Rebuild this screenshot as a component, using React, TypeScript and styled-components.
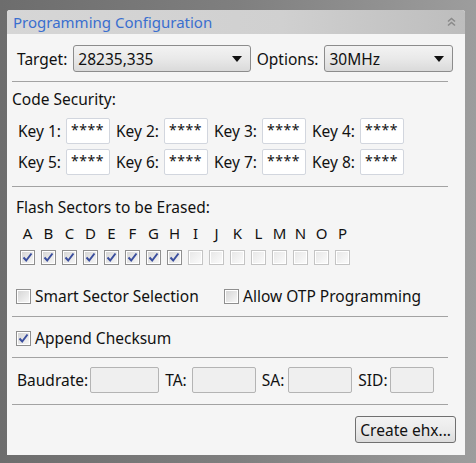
import React from 'react';
import styled, { createGlobalStyle } from 'styled-components';

const Global = createGlobalStyle`
  html, body { margin: 0; padding: 0; }
  body { font-family: 'Noto Sans', 'Open Sans', sans-serif; }
`;

const Page = styled.div`
  width: 476px;
  height: 463px;
  box-sizing: border-box;
  padding: 10px 11px 8px 7px;
  background: linear-gradient(90deg, #6d6d6d 0%, #7f7f7f 50%, #9d9d9d 100%);
  display: flex;
`;

const Panel = styled.div`
  flex: 1;
  display: flex;
  flex-direction: column;
  background: #f5f5f5;
  border-radius: 3px 3px 0 0;
  overflow: hidden;
  font-size: 15.5px;
  color: #111;
`;

const Header = styled.div`
  height: 24px;
  flex-shrink: 0;
  display: flex;
  align-items: center;
  justify-content: space-between;
  padding: 0 9px 0 6px;
  background: linear-gradient(90deg, #d6d6d6 0%, #d0d0d0 60%, #bdbdbd 100%);
`;

const Title = styled.span`
  color: #3a6fcf;
  font-size: 15px;
`;

const Body = styled.div`
  display: flex;
  flex-direction: column;
  padding: 11px 12px 0 5px;
`;

const Divider = styled.div<{ $top: number; $bottom: number }>`
  height: 1px;
  background: #a3a3a3;
  margin: ${p => p.$top}px 5px ${p => p.$bottom}px 0;
`;

const Row = styled.div<{ $gap?: number; $pl?: number }>`
  display: flex;
  align-items: center;
  gap: ${p => p.$gap ?? 6}px;
  padding-left: ${p => p.$pl ?? 0}px;
`;

const Field = styled.div<{ $gap: number }>`
  display: flex;
  align-items: center;
  gap: ${p => p.$gap}px;
`;

const Label = styled.span`
  white-space: nowrap;
  line-height: 18px;
`;

const Heading = styled.div<{ $pl: number; $mb?: number }>`
  padding-left: ${p => p.$pl}px;
  margin-bottom: ${p => p.$mb ?? 0}px;
  line-height: 18px;
`;

const Select = styled.div<{ $w: number }>`
  width: ${p => p.$w}px;
  height: 27px;
  box-sizing: border-box;
  border: 1px solid #8c8c8c;
  border-radius: 3px;
  background: linear-gradient(180deg, #f3f3f3 0%, #e9e9e9 50%, #dadada 100%);
  display: flex;
  align-items: center;
  justify-content: space-between;
  padding: 0 8px 0 4px;
`;

const Arrow = styled.span`
  width: 0;
  height: 0;
  border-left: 5px solid transparent;
  border-right: 5px solid transparent;
  border-top: 6px solid #111;
`;

const KeyGrid = styled.div`
  display: grid;
  grid-template-columns: repeat(4, 98px);
  justify-content: start;
  row-gap: 5px;
  padding-left: 6px;
`;

const KeyCell = styled.div`
  display: flex;
  align-items: center;
  justify-content: space-between;
  width: 92px;
`;

const KeyInput = styled.div`
  width: 44px;
  height: 26px;
  box-sizing: border-box;
  border: 1px solid #d2d6de;
  border-radius: 2px;
  background: #fff;
  padding: 2px 0 0 4px;
  font-size: 14px;
  line-height: 18px;
  letter-spacing: 0.5px;
`;

const SectorGrid = styled.div`
  display: grid;
  grid-template-columns: repeat(16, 15px);
  column-gap: 6px;
  row-gap: 7px;
  padding-left: 8px;
  margin-top: 7px;
`;

const Letter = styled.span`
  text-align: center;
  line-height: 20px;
  font-size: 15px;
`;

const Box = styled.span<{ $dim?: boolean }>`
  width: 15px;
  height: 15px;
  box-sizing: border-box;
  border: 1px solid ${p => (p.$dim ? '#c4c4c4' : '#8f8f8f')};
  background: #fff;
  padding: 1px;
  display: inline-flex;
  flex-shrink: 0;
`;

const BoxInner = styled.span<{ $dim?: boolean }>`
  flex: 1;
  background: ${p =>
    p.$dim
      ? 'linear-gradient(135deg, #e8e8e8, #fafafa)'
      : 'linear-gradient(135deg, #d6d6d6, #f6f6f6)'};
  display: flex;
  align-items: center;
  justify-content: center;
`;

const CheckLabel = styled.label<{ $w?: number }>`
  display: flex;
  align-items: center;
  gap: 4px;
  line-height: 18px;
  white-space: nowrap;
  ${p => (p.$w ? `width: ${p.$w}px;` : '')}
`;

const SmallInput = styled.div<{ $w: number }>`
  width: ${p => p.$w}px;
  height: 26px;
  box-sizing: border-box;
  border: 1px solid #b4b4b4;
  border-radius: 2px;
  background: #efefef;
`;

const Button = styled.button`
  font-family: inherit;
  font-size: 15.5px;
  color: #111;
  height: 27px;
  padding: 0 4px;
  border: 1px solid #707070;
  border-radius: 3px;
  background: linear-gradient(180deg, #f3f3f3 0%, #ebebeb 50%, #dcdcdc 100%);
`;

const Footer = styled.div`
  display: flex;
  justify-content: flex-end;
  margin-right: -3px;
`;

const Check = ({ on, dim }: { on?: boolean; dim?: boolean }) => (
  <Box $dim={dim}>
    <BoxInner $dim={dim}>
      {on && (
        <svg width="11" height="11" viewBox="0 0 11 11">
          <path d="M1.5 5.5 L4.2 8.5 L9.5 1.5" fill="none" stroke="#3b4f9e" strokeWidth="2" />
        </svg>
      )}
    </BoxInner>
  </Box>
);

const Collapse = () => (
  <svg width="9" height="10" viewBox="0 0 9 10">
    <path d="M1 4.5 L4.5 1.5 L8 4.5 M1 8.5 L4.5 5.5 L8 8.5" fill="none" stroke="#8a8a8a" strokeWidth="1.6" />
  </svg>
);

const sectors = 'ABCDEFGHIJKLMNOP'.split('');

const fields = [
  { label: 'Baudrate:', w: 69, gap: 2 },
  { label: 'TA:', w: 64, gap: 5 },
  { label: 'SA:', w: 64, gap: 4 },
  { label: 'SID:', w: 44, gap: 2 },
];

export default function App() {
  return (
    <>
      <Global />
      <Page>
        <Panel>
          <Header>
            <Title>Programming Configuration</Title>
            <Collapse />
          </Header>
          <Body>
            <Row $pl={5}>
              <Label>Target:</Label>
              <Select $w={178}>
                <span>28235,335</span>
                <Arrow />
              </Select>
              <Label>Options:</Label>
              <Select $w={129}>
                <span>30MHz</span>
                <Arrow />
              </Select>
            </Row>
            <Divider $top={9} $bottom={8} />
            <Heading $pl={0} $mb={10}>Code Security:</Heading>
            <KeyGrid>
              {[1, 2, 3, 4, 5, 6, 7, 8].map(n => (
                <KeyCell key={n}>
                  <Label>Key {n}:</Label>
                  <KeyInput>****</KeyInput>
                </KeyCell>
              ))}
            </KeyGrid>
            <Divider $top={11} $bottom={11} />
            <Heading $pl={4}>Flash Sectors to be Erased:</Heading>
            <SectorGrid>
              {sectors.map(s => (
                <Letter key={s}>{s}</Letter>
              ))}
              {sectors.map((s, i) => (
                <Check key={s} on={i < 8} dim={i >= 8} />
              ))}
            </SectorGrid>
            <Row $gap={0} $pl={4} style={{ marginTop: 22 }}>
              <CheckLabel $w={208}>
                <Check />
                Smart Sector Selection
              </CheckLabel>
              <CheckLabel>
                <Check />
                Allow OTP Programming
              </CheckLabel>
            </Row>
            <Divider $top={11} $bottom={12} />
            <Row $pl={4}>
              <CheckLabel>
                <Check on />
                Append Checksum
              </CheckLabel>
            </Row>
            <Divider $top={10} $bottom={9} />
            <Row $pl={5} $gap={6}>
              {fields.map(f => (
                <Field key={f.label} $gap={f.gap}>
                  <Label>{f.label}</Label>
                  <SmallInput $w={f.w} />
                </Field>
              ))}
            </Row>
            <Divider $top={11} $bottom={11} />
            <Footer>
              <Button>Create ehx...</Button>
            </Footer>
          </Body>
        </Panel>
      </Page>
    </>
  );
}
